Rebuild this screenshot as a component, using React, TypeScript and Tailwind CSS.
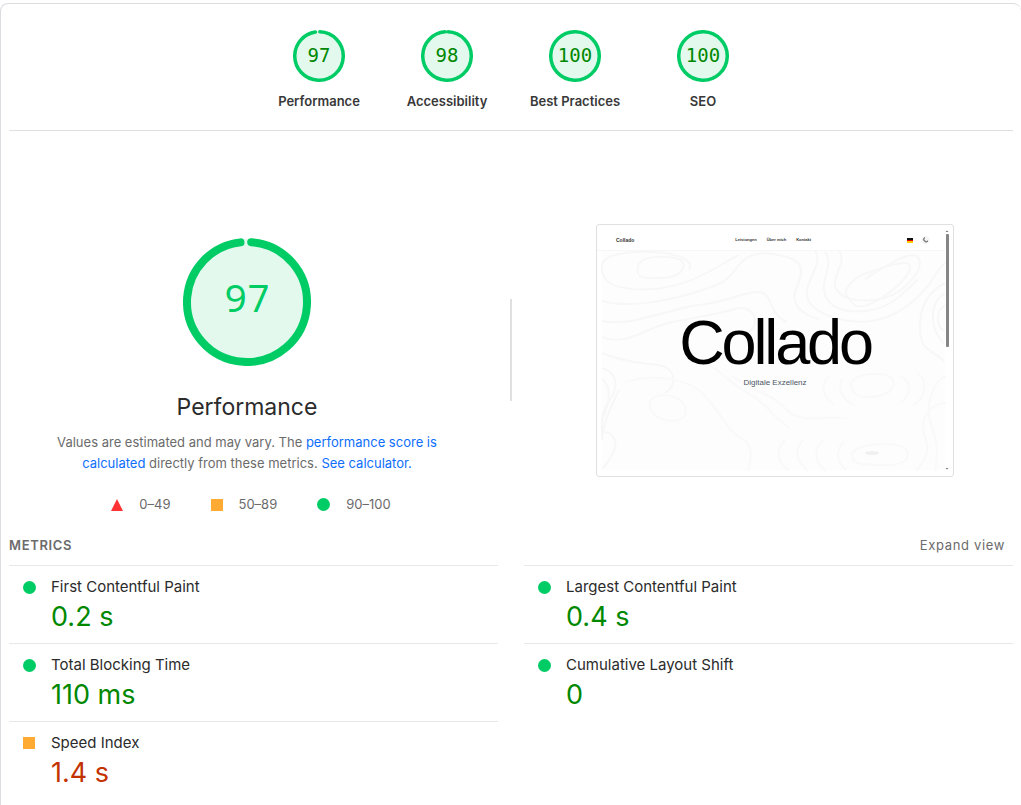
type Rating = 'good' | 'average';

const gauges = [
  { label: 'Performance', score: 97 },
  { label: 'Accessibility', score: 98 },
  { label: 'Best Practices', score: 100 },
  { label: 'SEO', score: 100 },
];

const metrics: { label: string; value: string; rating: Rating }[] = [
  { label: 'First Contentful Paint', value: '0.2 s', rating: 'good' },
  { label: 'Largest Contentful Paint', value: '0.4 s', rating: 'good' },
  { label: 'Total Blocking Time', value: '110 ms', rating: 'good' },
  { label: 'Cumulative Layout Shift', value: '0', rating: 'good' },
  { label: 'Speed Index', value: '1.4 s', rating: 'average' },
];

const contours = [
  'M5 46C2 32 18 28 40 27S100 30 92 45',
  'M5 46C8 58 15 62 35 64C90 68 120 40 142 30',
  'M41 42C42 33 56 31 70 32S90 37 85 45S70 53 55 53S40 49 41 42Z',
  'M5 76C24 82 60 79 96 68S130 55 142 40S172 27 190 32S206 48 199 64S208 91 222 94',
  'M5 96C35 102 70 84 102 80S143 68 160 67S170 89 190 97',
  'M5 112C30 122 50 102 75 97S117 90 138 84S165 103 149 108',
  'M5 128C24 136 44 138 61 140S82 160 68 168',
  'M218 26C226 38 212 50 210 66S227 91 247 95S291 97 315 77S335 49 348 38',
  'M228 27C238 40 221 57 229 72S257 88 275 85S306 69 321 54',
  'M242 26C251 38 233 52 239 64S268 78 287 73S327 46 322 34S287 42 268 54',
  'M251 73C244 66 255 53 270 48S312 33 313 41S300 64 281 75S257 81 251 73Z',
  'M348 58C329 68 322 84 323 105S334 124 347 136M348 68C332 78 332 103 347 119M348 80C337 88 340 103 348 106',
  'M5 143C22 148 21 164 12 176S5 198 5 212M5 154C17 164 11 181 5 195M22 165C13 184 6 198 5 215M5 207C14 206 23 215 16 228S10 238 5 244',
];

const faintContours = [
  'M53 183C50 172 64 167 77 172S92 189 84 194S56 194 53 183Z',
  'M28 157C51 150 90 150 109 172S132 207 144 213S155 232 151 246',
  'M94 135C116 135 130 157 151 168S176 194 192 202',
  'M135 151C156 166 176 169 190 185S236 188 250 194',
  'M255 164C251 154 263 148 282 149S300 164 288 169S259 174 255 164Z',
  'M245 154C239 163 247 177 258 180M232 151C221 161 228 174 237 179M303 151C317 157 313 171 303 178M320 148C332 155 329 173 316 180',
  'M188 215C176 228 183 239 192 246M207 214C195 226 201 238 211 246M228 214C213 225 220 239 229 246M247 216C237 228 241 238 249 245',
  'M255 229C258 218 305 214 310 226S299 241 280 240S255 239 255 229Z',
  'M349 151C337 155 327 180 334 199S341 228 338 246M349 178C331 179 322 195 328 212S327 235 319 246',
];

function Gauge({ score, large = false }: { score: number; large?: boolean }) {
  const size = large ? 128 : 52;
  const stroke = large ? 8 : 3.5;
  const radius = (size - stroke) / 2;
  const length = 2 * Math.PI * radius;
  const arc = score === 100 ? length : (length * score) / 100 - (large ? 0 : 1);
  return (
    <div className={large ? 'grid size-32 place-items-center' : 'grid size-13 place-items-center'}>
      <svg className="col-start-1 row-start-1 size-full" viewBox={`0 0 ${size} ${size}`} aria-hidden="true">
        <circle cx={size / 2} cy={size / 2} r={size / 2 - 1} fill="#e3f9ee" />
        <circle
          cx={size / 2}
          cy={size / 2}
          r={radius}
          fill="none"
          stroke="#00cc66"
          strokeWidth={stroke}
          strokeLinecap="round"
          strokeDasharray={`${arc} ${length}`}
          transform={`rotate(${large ? -86 : -88} ${size / 2} ${size / 2})`}
        />
      </svg>
      <span
        className={
          large
            ? "col-start-1 row-start-1 pb-[10px] font-['Noto_Sans_Mono','DejaVu_Sans_Mono',monospace] text-[38px] leading-none text-[#00cc66]"
            : "col-start-1 row-start-1 pb-[2px] font-['DejaVu_Sans_Mono',monospace] text-[19px] leading-none text-[#008800]"
        }
      >
        {score}
      </span>
    </div>
  );
}

function Marker({ rating }: { rating: Rating }) {
  return rating === 'good' ? (
    <span className="size-[13px] shrink-0 rounded-full bg-[#00cc66]" />
  ) : (
    <span className="size-3 shrink-0 bg-[#ffaa33]" />
  );
}

function SitePreview() {
  return (
    <div className="relative h-[253px] w-[358px] overflow-hidden rounded-[3px] border border-[#e0e0e0] bg-white text-black">
      <div className="absolute top-[26px] right-2 bottom-[6px] left-[5px] bg-[#fdfdfd]" />
      <svg className="absolute inset-0 size-full" viewBox="0 0 356 251" fill="none" aria-hidden="true">
        <g stroke="#f7f7f7" strokeWidth="2">
          {contours.map((d) => (
            <path key={d} d={d} />
          ))}
        </g>
        <g stroke="#f9f9f9" strokeWidth="2">
          {faintContours.map((d) => (
            <path key={d} d={d} />
          ))}
        </g>
        <ellipse cx="275" cy="228" rx="7" ry="2" fill="#f0f0f0" />
        <path d="M0 25.5H348" stroke="#f7f7f7" />
        <path d="M310 13h6v2h-6z" fill="#111" />
        <path d="M310 15h6v1h-6z" fill="#dd0000" />
        <path d="M310 16h6v2h-6z" fill="#ffcc00" />
        <circle cx="328.500" cy="15" r="4" fill="#f5f5f5" />
        <path d="M327.500 12.500a2.500 2.500 0 1 0 3.500 3.500 2.500 2.500 0 0 1-3.500-3.500Z" stroke="#555" strokeWidth=".7" />
        <path d="M348.500 7 350 5.500 351.500 7zM348.500 243l1.500 1.500 1.500-1.500z" fill="#777" />
        <rect x="349" y="9" width="3" height="113" rx="1" fill="#858585" />
      </svg>
      <div className="relative flex h-full flex-col font-['Liberation_Sans',sans-serif]">
        <div className="grid h-[30px] grid-cols-3 items-center pl-[19px] text-[4px] leading-none font-bold text-[#333333]">
          <span className="text-[5px]">Collado</span>
          <div className="flex gap-[10px] whitespace-nowrap">
            <span className="pl-[7px]">Leistungen</span>
            <span>Über mich</span>
            <span>Kontakt</span>
          </div>
        </div>
        <div className="flex flex-col items-center pt-[54px]">
          <span className="text-[63px] leading-[66px] tracking-tighter">Collado</span>
          <span className="text-[8px] leading-4 text-[#4b5563]">Digitale Exzellenz</span>
        </div>
      </div>
    </div>
  );
}

export default function App() {
  return (
    <main className="min-h-screen bg-white pt-[3px] font-[Inter,sans-serif] text-[#2b2b2b]">
      <div className="min-h-[802px] rounded-t-lg border border-r-0 border-b-0 border-[#dadce0] px-2">
        <header className="flex justify-center border-b border-[#e0e0e0] pt-[26px] pb-5">
          {gauges.map((g) => (
            <a key={g.label} href="#performance" className="flex w-32 flex-col items-center gap-[10px]">
              <Gauge score={g.score} />
              <span className="text-[13px] leading-[18px] font-semibold text-[#383838]">{g.label}</span>
            </a>
          ))}
        </header>

        <section id="performance" className="flex items-start pt-[93px]">
          <div className="flex flex-1 flex-col items-center pt-[14px]">
            <Gauge score={97} large />
            <h1 className="mt-6 text-[23px] leading-[34px]">Performance</h1>
            <p className="mt-2 max-w-[400px] text-center text-[13px] leading-[21px] text-[#6b6b6b]">
              Values are estimated and may vary. The{' '}
              <a href="#scoring" className="text-[#0d6efd]">performance score is calculated</a>{' '}
              directly from these metrics.{' '}
              <a href="#calculator" className="text-[#0d6efd]">See calculator.</a>
            </p>
            <ul className="mt-5 flex gap-10 pl-2 text-[13px] leading-[21px] text-[#6b6b6b]">
              <li className="flex items-center gap-4">
                <svg className="h-3 w-3" viewBox="0 0 12 12" aria-hidden="true">
                  <path d="M6 0 12 12H0z" fill="#ff3333" />
                </svg>
                0–49
              </li>
              <li className="flex items-center gap-4">
                <Marker rating="average" />
                50–89
              </li>
              <li className="flex items-center gap-4">
                <Marker rating="good" />
                90–100
              </li>
            </ul>
          </div>
          <div className="flex w-[52px] justify-center pt-[75px]">
            <div className="h-[102px] w-[2px] bg-[#e0e0e0]" />
          </div>
          <div className="flex flex-1 justify-center">
            <SitePreview />
          </div>
        </section>

        <section>
          <div className="flex items-center justify-between pt-5 pb-[10px] text-[13px] leading-5 text-[#6b6b6b]">
            <h2 className="font-semibold tracking-wider">METRICS</h2>
            <button type="button" className="px-2 tracking-wider">Expand view</button>
          </div>
          <div className="grid grid-cols-2 gap-x-[26px]">
            {metrics.map((m) => (
              <div key={m.label} className="flex h-[78px] border-t border-[#e8e8e8] pt-[11px] pl-[14px]">
                <div className="flex h-5 w-7 shrink-0 items-center">
                  <Marker rating={m.rating} />
                </div>
                <div>
                  <h3 className="text-[15px] leading-5">{m.label}</h3>
                  <p
                    className={
                      m.rating === 'good'
                        ? 'text-[27px] leading-10 text-[#008800]'
                        : 'text-[27px] leading-10 text-[#c33300]'
                    }
                  >
                    {m.value}
                  </p>
                </div>
              </div>
            ))}
          </div>
        </section>
      </div>
    </main>
  );
}
